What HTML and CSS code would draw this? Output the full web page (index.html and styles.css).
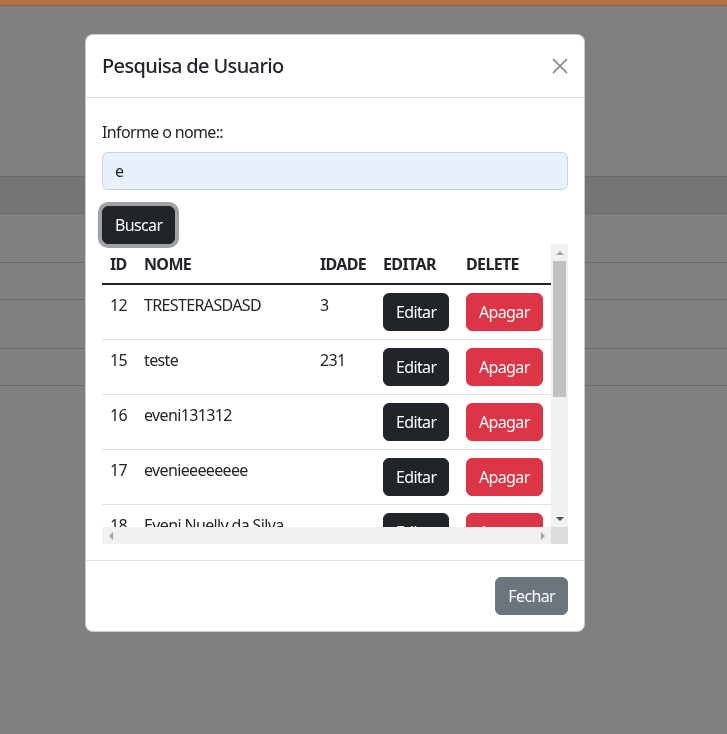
FILE: index.html
```html
<!DOCTYPE html>
<html lang="pt">
<head>
<meta charset="utf-8">
<title>Pesquisa de Usuario</title>
<link rel="stylesheet" href="styles.css">
</head>
<body>
<div class="topbar"></div>
<div class="bg-table">
  <div class="bg-head"></div>
  <div class="bg-row tall"></div>
  <div class="bg-row short"></div>
  <div class="bg-row tall"></div>
  <div class="bg-row short"></div>
</div>

<div class="modal">
  <div class="modal-header">
    <h5 class="modal-title">Pesquisa de Usuario</h5>
    <button class="btn-close" type="button" aria-label="Close">
      <svg viewBox="0 0 16 16" width="16" height="16"><path d="M1 1L15 15M15 1L1 15" stroke="#7f7f7f" stroke-width="1.6" fill="none"/></svg>
    </button>
  </div>
  <div class="modal-body">
    <label class="form-label" for="nome">Informe o nome::</label>
    <input class="form-control" id="nome" type="text" value="e">
    <div class="actions"><button class="btn btn-dark btn-focus" type="button">Buscar</button></div>
    <div class="scroller">
      <div class="viewport">
        <table class="table">
          <colgroup>
            <col class="c-id"><col class="c-nome"><col class="c-idade"><col class="c-editar"><col class="c-delete">
          </colgroup>
          <thead>
            <tr><th>ID</th><th>NOME</th><th>IDADE</th><th>EDITAR</th><th>DELETE</th></tr>
          </thead>
          <tbody>
            <tr><td>12</td><td>TRESTERASDASD</td><td>3</td><td><button class="btn btn-dark">Editar</button></td><td><button class="btn btn-danger">Apagar</button></td></tr>
            <tr><td>15</td><td>teste</td><td>231</td><td><button class="btn btn-dark">Editar</button></td><td><button class="btn btn-danger">Apagar</button></td></tr>
            <tr><td>16</td><td>eveni131312</td><td></td><td><button class="btn btn-dark">Editar</button></td><td><button class="btn btn-danger">Apagar</button></td></tr>
            <tr><td>17</td><td>evenieeeeeeee</td><td></td><td><button class="btn btn-dark">Editar</button></td><td><button class="btn btn-danger">Apagar</button></td></tr>
            <tr><td>18</td><td>Eveni Nuelly da Silva</td><td></td><td><button class="btn btn-dark">Editar</button></td><td><button class="btn btn-danger">Apagar</button></td></tr>
          </tbody>
        </table>
      </div>
      <div class="vbar">
        <div class="sb-btn"><span class="arrow up"></span></div>
        <div class="vtrack"><div class="vthumb"></div></div>
        <div class="sb-btn"><span class="arrow down"></span></div>
      </div>
      <div class="hbar">
        <div class="sb-btn"><span class="arrow left"></span></div>
        <div class="htrack"></div>
        <div class="sb-btn"><span class="arrow right"></span></div>
      </div>
      <div class="corner"></div>
    </div>
  </div>
  <div class="modal-footer">
    <button class="btn btn-secondary" type="button">Fechar</button>
  </div>
</div>
</body>
</html>
```
FILE: styles.css
```css
* { box-sizing: border-box; }
html, body { margin: 0; padding: 0; }
body {
  background: #808080;
  font-family: "Noto Sans", "Open Sans", Arial, sans-serif;
  font-size: 16px;
  line-height: 24px;
  letter-spacing: -0.04em;
  color: #212529;
  height: 734px;
  overflow: hidden;
}
.topbar {
  height: 6px;
  background: #b6703f;
  border-bottom: 1px solid #8a6650;
}
.bg-table { margin-top: 170px; }
.bg-head {
  height: 38px;
  background: #747576;
  border-top: 1px solid #6a6a6a;
  border-bottom: 1px solid #6a6a6a;
}
.bg-row { border-bottom: 1px solid #6b6b6b; }
.bg-row.tall { height: 49px; }
.bg-row.short { height: 37px; }

.modal {
  position: fixed;
  left: 85px;
  top: 34px;
  width: 500px;
  background: #fff;
  border: 1px solid rgba(0,0,0,.2);
  border-radius: 8px;
}
.modal-header {
  display: flex;
  align-items: center;
  justify-content: space-between;
  padding: 16px;
  border-bottom: 1px solid #dee2e6;
}
.modal-title {
  margin: 0;
  font-size: 20px;
  line-height: 30px;
  font-weight: 500;
}
.btn-close {
  border: 0;
  background: transparent;
  padding: 0;
  width: 16px;
  height: 16px;
  display: flex;
}
.modal-body { padding: 16px; }
.form-label {
  display: block;
  margin: 6px 0 8px;
}
.form-control {
  display: block;
  width: 100%;
  height: 38px;
  padding: 6px 12px;
  font: inherit;
  letter-spacing: inherit;
  color: #212529;
  background: #e8f0fe;
  border: 1px solid #c9d3e0;
  border-radius: 6px;
  outline: none;
}
.actions { margin-top: 16px; display: flex; }
.btn {
  display: inline-block;
  font: inherit;
  letter-spacing: inherit;
  line-height: 24px;
  padding: 6px 12px;
  border: 1px solid transparent;
  border-radius: 6px;
  color: #fff;
  cursor: pointer;
}
.btn-dark { background: #212529; border-color: #212529; }
.btn-danger { background: #dc3545; border-color: #dc3545; }
.btn-secondary { background: #6c757d; border-color: #6c757d; }
.btn-focus { box-shadow: 0 0 0 4px rgba(66,70,73,.5); }

.scroller {
  display: grid;
  grid-template-columns: 449px 17px;
  grid-template-rows: 283px 17px;
}
.viewport { overflow: hidden; }
.table {
  width: 451px;
  border-collapse: collapse;
  table-layout: fixed;
  vertical-align: top;
}
.c-id { width: 34px; }
.c-nome { width: 176px; }
.c-idade { width: 63px; }
.c-editar { width: 83px; }
.c-delete { width: 95px; }
.table th, .table td {
  padding: 8px;
  text-align: left;
  vertical-align: top;
  border-bottom: 1px solid #dee2e6;
  white-space: nowrap;
}
.table th { font-weight: 700; padding-bottom: 7px; }
.table thead th { border-bottom: 2px solid #212529; }

.vbar {
  background: #f1f1f1;
  display: flex;
  flex-direction: column;
}
.sb-btn {
  width: 17px;
  height: 17px;
  flex: none;
  display: flex;
  align-items: center;
  justify-content: center;
}
.vtrack { flex: 1; padding: 0 2px; }
.vthumb { height: 136px; background: #c1c1c1; }
.hbar {
  background: #f1f1f1;
  display: flex;
}
.htrack { flex: 1; }
.corner { background: #dcdcdc; }
.arrow { width: 0; height: 0; border-style: solid; }
.arrow.up { border-width: 0 4px 4px 4px; border-color: transparent transparent #a3a3a3 transparent; }
.arrow.down { border-width: 4px 4px 0 4px; border-color: #505050 transparent transparent transparent; }
.arrow.left { border-width: 4px 4px 4px 0; border-color: transparent #a3a3a3 transparent transparent; }
.arrow.right { border-width: 4px 0 4px 4px; border-color: transparent transparent transparent #a3a3a3; }

.modal-footer {
  display: flex;
  justify-content: flex-end;
  padding: 16px;
  border-top: 1px solid #dee2e6;
}
```
